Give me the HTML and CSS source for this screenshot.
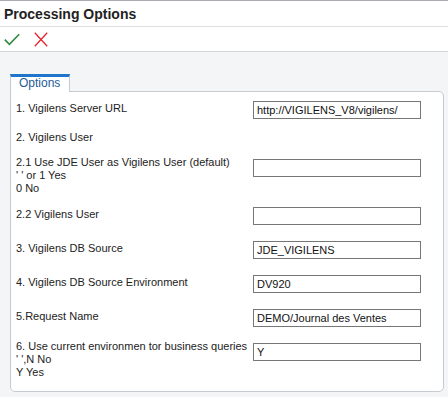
FILE: index.html
```html
<!DOCTYPE html>
<html>
<head>
<meta charset="utf-8">
<link rel="stylesheet" href="styles.css">
</head>
<body>
<div class="header">
  <h1 class="title">Processing Options</h1>
</div>
<div class="toolbar">
  <svg class="icon icon-ok" width="16" height="13" viewBox="0 0 16 13"><path d="M0.8 6.6 L5.4 11.4 L15.2 1.2" fill="none" stroke="#2f8a3f" stroke-width="1.6"/></svg>
  <svg class="icon icon-cancel" width="14" height="15" viewBox="0 0 14 15"><path d="M0.8 0.8 L13.2 14.2 M13.2 0.8 L0.8 14.2" fill="none" stroke="#e3262e" stroke-width="1.3"/></svg>
</div>
<div class="content">
  <div class="tabs"><div class="tab">Options</div></div>
  <div class="panel">
    <div class="row">
      <div class="label single">1. Vigilens Server URL</div>
      <input class="field" type="text" value="http://VIGILENS_V8/vigilens/">
    </div>
    <div class="row gap-a">
      <div class="label">2. Vigilens User</div>
    </div>
    <div class="row gap-a">
      <div class="label">2.1 Use JDE User as Vigilens User (default)<br>' ' or 1 Yes<br>0 No</div>
      <input class="field multi" type="text" value="">
    </div>
    <div class="row gap-a">
      <div class="label single">2.2 Vigilens User</div>
      <input class="field" type="text" value="">
    </div>
    <div class="row gap-b">
      <div class="label single">3. Vigilens DB Source</div>
      <input class="field" type="text" value="JDE_VIGILENS">
    </div>
    <div class="row gap-b">
      <div class="label single">4. Vigilens DB Source Environment</div>
      <input class="field" type="text" value="DV920">
    </div>
    <div class="row gap-b">
      <div class="label single">5.Request Name</div>
      <input class="field" type="text" value="DEMO/Journal des Ventes">
    </div>
    <div class="row gap-c">
      <div class="label">6. Use current environmen tor business queries<br>' ',N No<br>Y Yes</div>
      <input class="field multi" type="text" value="Y">
    </div>
  </div>
</div>
</body>
</html>
```
FILE: styles.css
```css
* { box-sizing: border-box; }
html, body { margin: 0; padding: 0; }
body {
  width: 448px;
  height: 397px;
  overflow: hidden;
  font-family: "Liberation Sans", Arial, sans-serif;
  font-size: 11px;
  color: #222;
  background: #f4f5f7;
}
.header {
  background: #fff;
  border-top: 1px solid #a9adb1;
  border-bottom: 1px solid #dcdee0;
  height: 27px;
  padding: 2px 0 0 4px;
}
.title {
  margin: 0;
  font-size: 14px;
  font-weight: bold;
  line-height: 23px;
  color: #222;
}
.toolbar {
  background: #fff;
  height: 25px;
  border-bottom: 1px solid #d2d6da;
  display: flex;
  align-items: flex-start;
  padding-left: 4px;
}
.icon { display: block; }
.icon-ok { margin-top: 6px; }
.icon-cancel { margin-top: 5px; margin-left: 14px; }
.content {
  padding: 22px 4px 5px 10px;
}
.tabs { display: flex; }
.tab {
  position: relative;
  z-index: 1;
  background: #fff;
  border-top: 3px solid #1f74cc;
  border-left: 1px solid #c5cbd1;
  border-right: 1px solid #c5cbd1;
  width: 60px;
  height: 18px;
  margin-bottom: -1px;
  padding: 0 0 0 8px;
  font-size: 12px;
  line-height: 13px;
  color: #1e5b98;
}
.panel {
  background: #fff;
  border: 1px solid #c5cbd1;
  border-radius: 0 5px 5px 5px;
  height: 301px;
  padding: 9px 0 0 5px;
}
.row {
  display: flex;
  align-items: flex-start;
}
.gap-a { margin-top: 12px; }
.gap-b { margin-top: 16px; }
.gap-c { margin-top: 13px; }
.label {
  width: 237px;
  flex: none;
  line-height: 13px;
}
.label.single { margin-top: 1px; }
.field {
  display: block;
  width: 168px;
  height: 18px;
  margin: 0;
  border: 1px solid #767676;
  border-radius: 0;
  padding: 0 3px;
  font-family: "Liberation Sans", Arial, sans-serif;
  font-size: 11px;
  color: #111;
  background: #fff;
  outline: none;
}
.field.multi { margin-top: 3px; }
```
